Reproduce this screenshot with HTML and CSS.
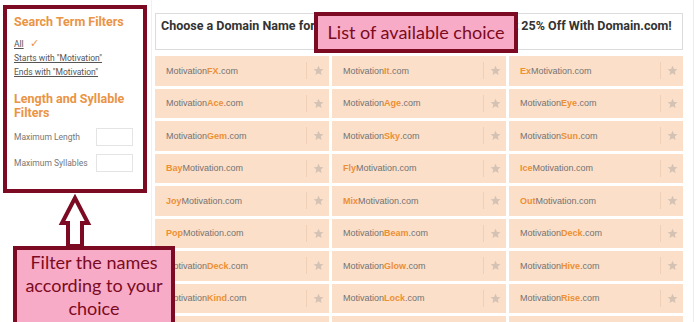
FILE: index.html
```html
<!DOCTYPE html>
<html lang="en">
<head>
  <meta charset="UTF-8">
  <title>Motivation Domain Names</title>
  <link rel="stylesheet" href="styles.css">
</head>
<body>
<div class="page">
  <div class="sidebar">
    <h3>Search Term Filters</h3>
    <div class="links">
      <a href="#">All</a> <span class="check">✓</span><br>
      <a href="#">Starts with "Motivation"</a><br>
      <a href="#">Ends with "Motivation"</a>
    </div>
    <h3 class="second">Length and Syllable Filters</h3>
    <div class="field"><label>Maximum Length</label><input type="text"></div>
    <div class="field"><label>Maximum Syllables</label><input type="text"></div>
  </div>

  <div class="main">
    <div class="promo">Choose a Domain Name for Your Motivational Websites and Get 25% Off With Domain.com!</div>
    <div class="grid" id="grid"></div>
  </div>
</div>

<div class="note note-top">List of available choice</div>
<svg class="arrow" width="36" height="56" viewBox="0 0 36 56">
  <polygon points="17,4 4,29 10,29 10,52 24,52 24,29 30,29" fill="#fff" stroke="#7b0a22" stroke-width="4" stroke-linejoin="miter"/>
</svg>
<div class="note note-bottom">Filter the names according to your choice</div>

<script>
const names = [
  ["Motivation", "FX", 1], ["Motivation", "It", 1], ["Ex", "Motivation", 0],
  ["Motivation", "Ace", 1], ["Motivation", "Age", 1], ["Motivation", "Eye", 1],
  ["Motivation", "Gem", 1], ["Motivation", "Sky", 1], ["Motivation", "Sun", 1],
  ["Bay", "Motivation", 0], ["Fly", "Motivation", 0], ["Ice", "Motivation", 0],
  ["Joy", "Motivation", 0], ["Mix", "Motivation", 0], ["Out", "Motivation", 0],
  ["Pop", "Motivation", 0], ["Motivation", "Beam", 1], ["Motivation", "Deck", 1],
  ["Motivation", "Deck", 1], ["Motivation", "Glow", 1], ["Motivation", "Hive", 1],
  ["Motivation", "Kind", 1], ["Motivation", "Lock", 1], ["Motivation", "Rise", 1],
  ["", "", 0], ["", "", 0], ["", "", 0]
];

const star = '<svg width="11" height="11" viewBox="0 0 24 24"><path d="M12 1.5l3.2 7 7.6.7-5.8 5.1 1.8 7.5L12 17.8l-6.6 4 1.8-7.5L1.4 9.2l7.6-.7z" fill="#d4c2b4"/></svg>';

let html = "";
names.forEach(n => {
  let label = "";
  if (n[0]) {
    label = n[2] ? `${n[0]}<b>${n[1]}</b>.com` : `<b>${n[0]}</b>${n[1]}.com`;
  }
  html += `<div class="card"><span class="name">${label}</span><span class="sep"></span><span class="star">${star}</span></div>`;
});
document.getElementById("grid").innerHTML = html;
</script>
</body>
</html>
```

FILE: styles.css
```css
body { margin: 0; font-family: Roboto, "Liberation Sans", sans-serif; background: #fff; overflow: hidden; }
.page { display: flex; align-items: flex-start; height: 322px; overflow: hidden; }

.sidebar {
  width: 129px;
  height: 174px;
  margin: 5px 0 0 3px;
  padding: 6px 0 0 7px;
  border: 4px solid #7b0a22;
  box-sizing: content-box;
  flex-shrink: 0;
}
.sidebar h3 { margin: 0; font-size: 12.5px; color: #ea9445; line-height: 14px; }
.sidebar h3.second { margin-top: 13px; }
.links { margin-top: 8px; font-size: 8.5px; line-height: 14px; color: #555; }
.links a { color: #555; }
.check { color: #ea9445; font-size: 11px; margin-left: 4px; }
.field { display: flex; align-items: center; justify-content: space-between; margin-top: 8px; padding-right: 10px; font-size: 8.5px; color: #777; }
.field:first-of-type { margin-top: 12px; }
.field input { width: 35px; height: 16px; padding: 0; margin: 0; border: 1px solid #e4e4e4; }

.main {
  margin-left: 4px;
  padding: 13px 10px 0 3px;
  border-left: 1px solid #f0f0f0;
  border-right: 1px solid #ececec;
  height: 322px;
  box-sizing: border-box;
  overflow: hidden;
}
.promo {
  width: 528px;
  height: 37px;
  border: 1px solid #dcdcdc;
  box-sizing: border-box;
  padding: 4px 5px;
  font-size: 12.5px;
  font-weight: bold;
  color: #333;
  white-space: nowrap;
  overflow: hidden;
}
.grid {
  display: grid;
  grid-template-columns: repeat(3, 174px);
  grid-auto-rows: 29.5px;
  column-gap: 3px;
  row-gap: 3px;
  margin-top: 6px;
}
.card { display: flex; align-items: center; background: #fcdfc8; }
.name { flex: 1; padding-left: 11px; font-family: "Liberation Sans", Arial, sans-serif; font-size: 9px; color: #737373; }
.name b { color: #ec8f35; }
.sep { width: 1px; height: 17px; background: #efcfb6; }
.star { width: 22px; display: flex; justify-content: center; }

.note {
  position: absolute;
  background: #f8abc6;
  border: 4px solid #7b0a22;
  color: #7b0a22;
  font-family: Lato, "Open Sans", sans-serif;
  text-align: center;
  box-sizing: border-box;
}
.note-top { left: 314px; top: 12px; width: 204px; height: 41px; font-size: 18px; line-height: 33px; }
.note-bottom { left: 13px; top: 246px; width: 162px; height: 76px; border-bottom: none; font-size: 18px; line-height: 23px; padding: 1px 6px 0; }
.arrow { position: absolute; left: 58px; top: 194px; }
```
